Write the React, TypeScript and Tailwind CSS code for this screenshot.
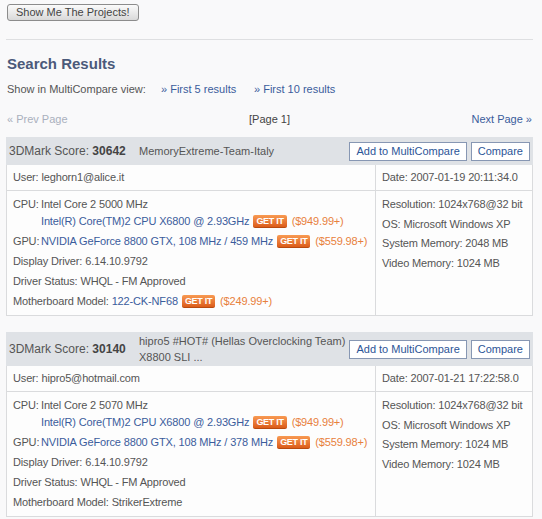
import React from "react"

type Result = {
  score: string
  team: string
  user: string
  date: string
  cpu: string
  cpuModel: string
  cpuPrice: string
  gpu: string
  gpuPrice: string
  driver: string
  status: string
  mobo: string
  moboPrice?: string
  res: string
  os: string
  sysMem: string
  vidMem: string
}

const results: Result[] = [
  {
    score: "30642",
    team: "MemoryExtreme-Team-Italy",
    user: "leghorn1@alice.it",
    date: "2007-01-19 20:11:34.0",
    cpu: "Intel Core 2 5000 MHz",
    cpuModel: "Intel(R) Core(TM)2 CPU X6800 @ 2.93GHz",
    cpuPrice: "($949.99+)",
    gpu: "NVIDIA GeForce 8800 GTX, 108 MHz / 459 MHz",
    gpuPrice: "($559.98+)",
    driver: "6.14.10.9792",
    status: "WHQL - FM Approved",
    mobo: "122-CK-NF68",
    moboPrice: "($249.99+)",
    res: "1024x768@32 bit",
    os: "Microsoft Windows XP",
    sysMem: "2048 MB",
    vidMem: "1024 MB",
  },
  {
    score: "30140",
    team: "hipro5 #HOT# (Hellas Overclocking Team) X8800 SLI ...",
    user: "hipro5@hotmail.com",
    date: "2007-01-21 17:22:58.0",
    cpu: "Intel Core 2 5070 MHz",
    cpuModel: "Intel(R) Core(TM)2 CPU X6800 @ 2.93GHz",
    cpuPrice: "($949.99+)",
    gpu: "NVIDIA GeForce 8800 GTX, 108 MHz / 378 MHz",
    gpuPrice: "($559.98+)",
    driver: "6.14.10.9792",
    status: "WHQL - FM Approved",
    mobo: "StrikerExtreme",
    res: "1024x768@32 bit",
    os: "Microsoft Windows XP",
    sysMem: "1024 MB",
    vidMem: "1024 MB",
  },
]

const GetIt = () => (
  <span className="ml-[4px] inline-block h-[13px] shrink-0 whitespace-nowrap rounded-[2px] border-b border-[#b84a10] bg-linear-to-b from-[#f89a52] to-[#dc5c18] px-[3px] text-[9px] font-bold leading-[12px] tracking-[-0.3px] text-white">
    GET IT
  </span>
)

const Price = ({ children }: { children: React.ReactNode }) => (
  <span className="ml-[5px] whitespace-nowrap text-[#e8803c]">{children}</span>
)

const Card = ({ r }: { r: Result }) => {
  return (
    <div>
      {/* header band */}
      <div className="flex min-h-[28px] items-center bg-[#dfe2e6] py-[1px] pl-[3px] pr-[3px]">
        <div className="w-[130px] shrink-0 text-[12px] text-[#555]">
          3DMark Score: <b className="text-[#444]">{r.score}</b>
        </div>
        <div className="flex-1 text-[11px] leading-[16px] text-[#555]">{r.team}</div>
        <div className="flex shrink-0 gap-[4px]">
          <button className="h-[19px] border border-[#8797b3] bg-white px-[6px] text-[11px] text-[#2c5597]">
            Add to MultiCompare
          </button>
          <button className="h-[19px] border border-[#8797b3] bg-white px-[6px] text-[11px] text-[#2c5597]">
            Compare
          </button>
        </div>
      </div>

      {/* body */}
      <div className="grid grid-cols-[369px_1fr] border-x border-b border-[#dadbdd] bg-[#fdfdfd] tracking-[-0.15px]">
        <div className="flex h-[26px] items-center border-b border-r border-[#dadbdd] pl-[6px]">
          User: {r.user}
        </div>
        <div className="flex h-[26px] items-center border-b border-[#dadbdd] pl-[6px]">
          Date: {r.date}
        </div>

        <div className="flex flex-col gap-[3px] whitespace-nowrap border-r border-[#dadbdd] pb-[5px] pl-[6px] pt-[5px] leading-[17px]">
          <div className="grid grid-cols-[28px_1fr]">
            <span>CPU:</span>
            <div>
              <div>{r.cpu}</div>
              <div className="flex items-center">
                <a className="text-[#3b5c9c]">{r.cpuModel}</a>
                <GetIt />
                <Price>{r.cpuPrice}</Price>
              </div>
            </div>
          </div>
          <div className="grid grid-cols-[28px_1fr]">
            <span>GPU:</span>
            <div className="flex items-center">
              <a className="text-[#3b5c9c]">{r.gpu}</a>
              <GetIt />
              <Price>{r.gpuPrice}</Price>
            </div>
          </div>
          <div>Display Driver: {r.driver}</div>
          <div>Driver Status: {r.status}</div>
          <div className="flex items-center">
            <span>Motherboard Model:&nbsp;</span>
            {r.moboPrice ? (
              <>
                <a className="text-[#3b5c9c]">{r.mobo}</a>
                <GetIt />
                <Price>{r.moboPrice}</Price>
              </>
            ) : (
              <span>{r.mobo}</span>
            )}
          </div>
        </div>

        <div className="flex flex-col gap-[2.5px] whitespace-nowrap pl-[6px] pt-[5px] leading-[17px]">
          <div>Resolution: {r.res}</div>
          <div>OS: {r.os}</div>
          <div>System Memory: {r.sysMem}</div>
          <div>Video Memory: {r.vidMem}</div>
        </div>
      </div>
    </div>
  )
}

const App = () => {
  return (
    <div className="min-h-screen bg-[#f9f9fa] font-['Liberation_Sans',Arial,sans-serif] text-[11px] text-[#555]">
      <div className="ml-[6px] w-[527px] pt-[4px] pb-[5px]">
        <button className="ml-[1px] h-[17px] rounded-[3px] border border-[#8c8c8c] bg-linear-to-b from-[#fbfbfb] to-[#d9d9d9] px-[8px] text-[11px] leading-[15px] text-[#444]">
          Show Me The Projects!
        </button>

        <div className="mt-[18px] h-px bg-[#dedfe1]" />

        <h2 className="mt-[15px] pl-[1px] text-[15px] font-bold leading-[18px] text-[#4b5a7a]">
          Search Results
        </h2>

        <div className="mt-[10px] flex pl-[1px] leading-[13px]">
          <span className="w-[154px]">Show in MultiCompare view:</span>
          <a className="w-[93px] text-[#3b5c9c]">» First 5 results</a>
          <a className="text-[#3b5c9c]">» First 10 results</a>
        </div>

        <div className="mt-[17px] grid grid-cols-3 px-[1px] leading-[13px]">
          <span className="text-[#a9b0bd]">« Prev Page</span>
          <span className="text-center text-[#444]">[Page 1]</span>
          <a className="text-right text-[#3b5c9c]">Next Page »</a>
        </div>

        <div className="mt-[11px] flex flex-col gap-[16px]">
          {results.map((r) => (
            <Card key={r.score} r={r} />
          ))}
        </div>
      </div>
    </div>
  )
}

export default App
